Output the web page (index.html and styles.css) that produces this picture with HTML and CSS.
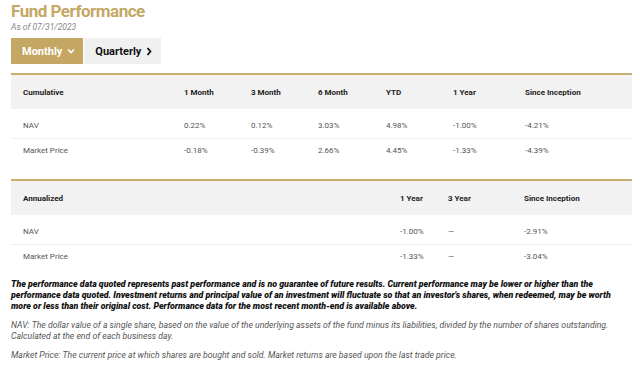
FILE: index.html
```html
<!DOCTYPE html>
<html lang="en">
<head>
    <meta charset="UTF-8">
    <meta name="viewport" content="width=device-width, initial-scale=1.0">
    <title>Fund Performance</title>
    <link rel="stylesheet" href="styles.css">
</head>
<body>
    <div class="container">
        <h2 class="title">Fund Performance</h2>
        <p class="as-of">As of 07/31/2023</p>

        <div class="tabs">
            <button class="tab active">Monthly
                <svg width="8" height="6" viewBox="0 0 8 6"><path d="M1 1.5 L4 4.5 L7 1.5" fill="none" stroke="currentColor" stroke-width="1.6"/></svg>
            </button>
            <button class="tab">Quarterly
                <svg width="6" height="9" viewBox="0 0 6 9"><path d="M1.5 1 L4.5 4.5 L1.5 8" fill="none" stroke="currentColor" stroke-width="1.8"/></svg>
            </button>
        </div>

        <table class="perf first">
            <colgroup>
                <col style="width:161px"><col style="width:67px"><col style="width:67px"><col style="width:68px"><col style="width:67px"><col style="width:72px"><col>
            </colgroup>
            <thead>
                <tr>
                    <th>Cumulative</th>
                    <th>1 Month</th>
                    <th>3 Month</th>
                    <th>6 Month</th>
                    <th>YTD</th>
                    <th>1 Year</th>
                    <th>Since Inception</th>
                </tr>
            </thead>
            <tbody>
                <tr class="sep">
                    <td>NAV</td><td>0.22%</td><td>0.12%</td><td>3.03%</td><td>4.98%</td><td>-1.00%</td><td>-4.21%</td>
                </tr>
                <tr>
                    <td>Market Price</td><td>-0.18%</td><td>-0.39%</td><td>2.66%</td><td>4.45%</td><td>-1.33%</td><td>-4.39%</td>
                </tr>
                <tr class="spacer"><td colspan="7"></td></tr>
            </tbody>
        </table>

        <table class="perf">
            <colgroup>
                <col style="width:377px"><col style="width:48px"><col style="width:76px"><col>
            </colgroup>
            <thead>
                <tr>
                    <th>Annualized</th>
                    <th>1 Year</th>
                    <th>3 Year</th>
                    <th>Since Inception</th>
                </tr>
            </thead>
            <tbody>
                <tr class="sep">
                    <td>NAV</td><td>-1.00%</td><td>&mdash;</td><td>-2.91%</td>
                </tr>
                <tr>
                    <td>Market Price</td><td>-1.33%</td><td>&mdash;</td><td>-3.04%</td>
                </tr>
            </tbody>
        </table>

        <p class="note strong">The performance data quoted represents past performance and is no guarantee of future results. Current performance may be lower or higher than the performance data quoted. Investment returns and principal value of an investment will fluctuate so that an investor's shares, when redeemed, may be worth more or less than their original cost. Performance data for the most recent month-end is available above.</p>
        <p class="note">NAV: The dollar value of a single share, based on the value of the underlying assets of the fund minus its liabilities, divided by the number of shares outstanding. Calculated at the end of each business day.</p>
        <p class="note">Market Price: The current price at which shares are bought and sold. Market returns are based upon the last trade price.</p>
    </div>
</body>
</html>
```

FILE: styles.css
```css
body {
    margin: 0;
    font-family: Roboto, "Liberation Sans", sans-serif;
    background: white;
    color: #222;
}
.container {
    padding: 0 8px 0 11px;
}
.title {
    margin: 0;
    padding-top: 1px;
    font-size: 17px;
    line-height: 20px;
    letter-spacing: -0.5px;
    font-weight: 700;
    color: #c4a866;
}
.as-of {
    margin: 1px 0 0;
    font-size: 8.5px;
    line-height: 10px;
    font-style: italic;
    color: #888;
}
.tabs {
    display: flex;
    margin-top: 6px;
    gap: 1px;
}
.tab {
    display: flex;
    align-items: center;
    gap: 5px;
    height: 26px;
    padding: 0 9px 0 11px;
    border: none;
    font-family: inherit;
    font-size: 11px;
    font-weight: 700;
    background: #f0f0f0;
    color: #111;
}
.tab.active {
    padding-right: 8px;
    background: #c4a762;
    color: white;
}
.perf {
    width: 621px;
    table-layout: fixed;
    border-collapse: collapse;
    border-top: 2px solid #c9ae6e;
    font-size: 8px;
}
.perf.first {
    margin-top: 9px;
}
th {
    padding: 13px 0 11px 12px;
    line-height: 10px;
    background: #f2f2f2;
    text-align: left;
    font-weight: 700;
    color: #222;
}
td {
    padding: 7px 0 8px 12px;
    line-height: 10px;
    color: #555;
}
tbody tr:first-child td {
    padding-top: 12px;
    padding-bottom: 7px;
}
.sep td {
    border-bottom: 1px solid #f0f0f0;
}
.spacer td {
    height: 15px;
    padding: 0;
}
.note {
    margin: 6px 0 0;
    font-size: 8.7px;
    line-height: 11px;
    font-style: italic;
    color: #555;
}
.note + .note {
    margin-top: 8px;
}
.note.strong {
    margin-top: 9px;
    font-size: 8.8px;
    font-weight: 900;
    color: #111;
}
```
